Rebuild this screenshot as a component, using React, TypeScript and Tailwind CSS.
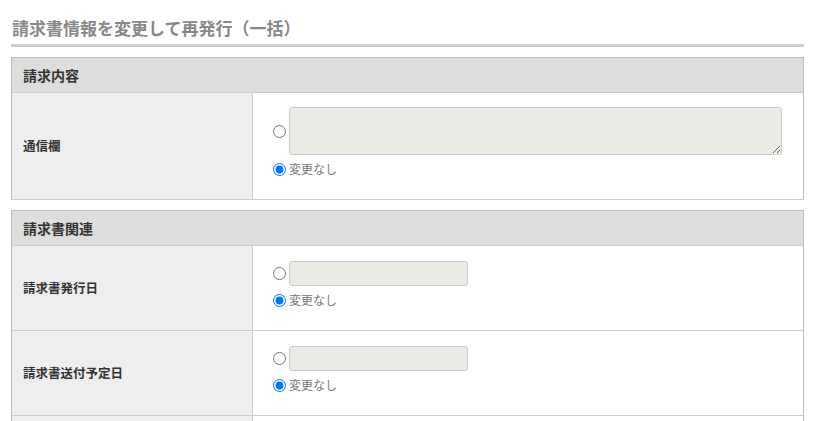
import React from 'react';

const font = { fontFamily: '"Noto Sans CJK JP", "Noto Sans", sans-serif' };

function NoChange({ name }: { name: string }) {
  return (
    <label className="flex items-center gap-[3px] mt-[7px] text-[12px] leading-[14px] text-[#777]">
      <input type="radio" name={name} defaultChecked className="m-0 w-[13px] h-[13px]" />
      変更なし
    </label>
  );
}

function Row({ label, name, area }: { label: string; name: string; area?: boolean }) {
  return (
    <div className={`flex border-t border-[#ccc] ${area ? 'h-[107px]' : 'h-[85px]'}`}>
      <div className="w-[241px] shrink-0 bg-[#eee] border-r border-[#ccc] flex items-center pl-[11px] text-[12.5px] font-bold text-[#333]">
        {label}
      </div>
      <div className={`flex-1 pl-[20px] ${area ? 'pt-[14px]' : 'pt-[15px]'}`}>
        <div className="flex items-center gap-[3px]">
          <input type="radio" name={name} className="m-0 w-[13px] h-[13px]" />
          {area ? (
            <textarea className="w-[493px] h-[48px] bg-[#ebeae4] border border-[#ccc] rounded-[3px] block" />
          ) : (
            <input type="text" className="w-[179px] h-[25px] bg-[#ebeae4] border border-[#ccc] rounded-[3px]" />
          )}
        </div>
        <NoChange name={name} />
      </div>
    </div>
  );
}

function Section({ title, children }: { title: string; children: React.ReactNode }) {
  return (
    <div className="border border-[#bbb] border-b-[#ccc] mb-[10px]">
      <div className="h-[35px] bg-[#ddd] flex items-center pl-[11px] text-[14px] font-bold text-[#333] border-b border-[#bbb]">
        {title}
      </div>
      <div className="-mt-px">{children}</div>
    </div>
  );
}

export default function App() {
  return (
    <div className="bg-white min-h-screen pl-[11px] pt-[16px]" style={font}>
      <div className="w-[793px]">
        <h2 className="text-[17px] leading-[24px] font-bold text-[#888] pl-px">請求書情報を変更して再発行（一括）</h2>
        <div className="h-[3px] bg-[#ccc] mt-[4px] mb-[10px]" />
        <Section title="請求内容">
          <Row label="通信欄" name="memo" area />
        </Section>
        <Section title="請求書関連">
          <Row label="請求書発行日" name="issue" />
          <Row label="請求書送付予定日" name="send" />
          <Row label="請求書送付方法" name="method" />
        </Section>
      </div>
    </div>
  );
}
